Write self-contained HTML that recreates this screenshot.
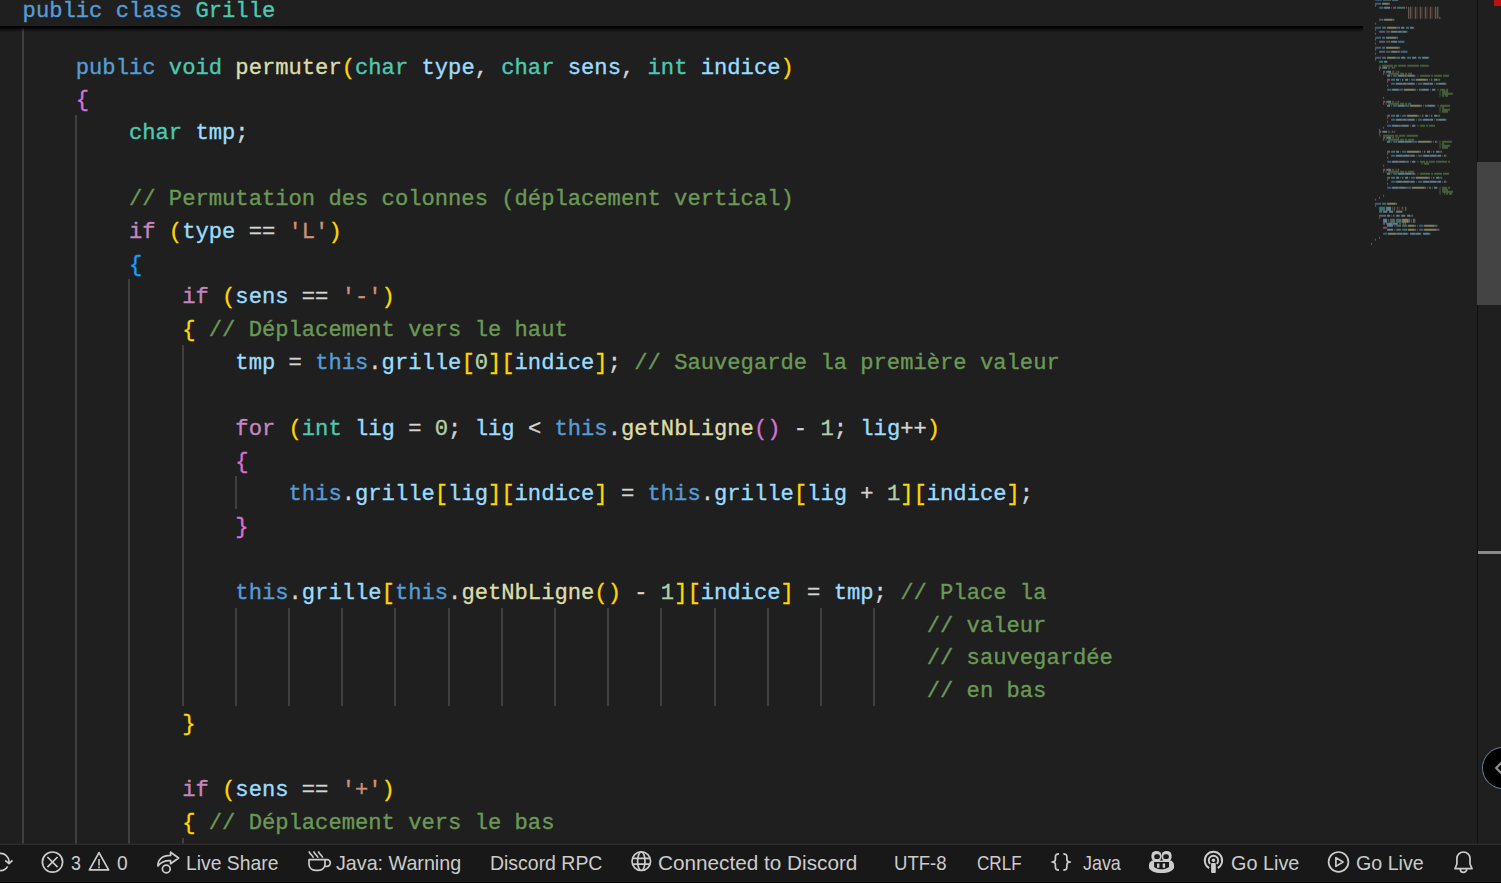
<!DOCTYPE html>
<html lang="fr"><head><meta charset="utf-8"><title>Grille.java</title>
<style>
html,body{margin:0;padding:0;background:#1f1f1f;}
body{width:1501px;height:883px;position:relative;overflow:hidden;font-family:"Liberation Sans",sans-serif;}
#ed{position:absolute;left:0;top:0;width:1501px;height:845px;overflow:hidden;background:#1f1f1f;}
.ln{position:absolute;left:22.6px;height:32.83px;line-height:32.83px;white-space:pre;font-family:"Liberation Mono",monospace;font-size:22.17px;color:#d4d4d4;letter-spacing:0;-webkit-text-stroke:.35px currentColor;}
.ln span{-webkit-text-stroke:.35px currentColor}
.g{position:absolute;width:2px;background:#404040;display:block}
#sticky{position:absolute;left:0;top:0;width:1363px;height:26px;background:#1f1f1f;z-index:3;overflow:hidden}
#shadow{position:absolute;left:0;top:26px;width:1363px;height:6px;z-index:3;background:linear-gradient(#000 0,#000 22%,rgba(0,0,0,.55) 50%,rgba(0,0,0,0) 100%)}
#sticky .ln{top:-3.6px}
.mm{position:absolute;left:1365px;top:0}
#sbar{position:absolute;left:1477px;top:0;width:24px;height:845px;border-left:1px solid #111113;box-sizing:border-box}
#thumb{position:absolute;left:1477px;top:162px;width:24px;height:143px;background:#444}
#err{position:absolute;left:1494px;top:0;width:7px;height:6px;background:#b81414}
#mark{position:absolute;left:1478px;top:551px;width:23px;height:3px;background:#8b8b89}
#fab{position:absolute;left:1482.6px;top:748px;width:40px;height:40px;border-radius:50%;background:#000;box-shadow:0 0 0 1px #5d7f95}
#sline{position:absolute;left:0;top:843px;width:1501px;height:1px;background:rgba(43,43,43,.45)}
#status{position:absolute;left:0;top:844px;width:1501px;height:39px;background:#181818;border-top:1px solid #2b2b2b;box-sizing:border-box;color:#ccc;font-size:20.2px;}
#bl1{position:absolute;left:0;top:881px;width:1501px;height:1px;background:#1f1f1f;z-index:5}
#bl2{position:absolute;left:0;top:882px;width:1501px;height:1px;background:#000;z-index:5}
#status .t{position:absolute;transform-origin:0 0;top:0.4px;height:36px;line-height:36px;white-space:pre}
#status svg{position:absolute}
</style></head><body>
<div id="ed">
<i class="g" style="left:22px;top:0px;height:844px"></i><i class="g" style="left:75px;top:115px;height:729px"></i><i class="g" style="left:128px;top:279px;height:565px"></i><i class="g" style="left:182px;top:345px;height:361px"></i><i class="g" style="left:182px;top:838px;height:6px"></i><i class="g" style="left:235px;top:476px;height:33px"></i><i class="g" style="left:235px;top:608px;height:98px"></i><i class="g" style="left:288px;top:608px;height:98px"></i><i class="g" style="left:341px;top:608px;height:98px"></i><i class="g" style="left:394px;top:608px;height:98px"></i><i class="g" style="left:448px;top:608px;height:98px"></i><i class="g" style="left:501px;top:608px;height:98px"></i><i class="g" style="left:554px;top:608px;height:98px"></i><i class="g" style="left:607px;top:608px;height:98px"></i><i class="g" style="left:660px;top:608px;height:98px"></i><i class="g" style="left:714px;top:608px;height:98px"></i><i class="g" style="left:767px;top:608px;height:98px"></i><i class="g" style="left:820px;top:608px;height:98px"></i><i class="g" style="left:873px;top:608px;height:98px"></i>
<div class="ln" style="top:19.72px"></div><div class="ln" style="top:52.55px">    <span style="color:#569cd6">public </span><span style="color:#4ec9b0">void </span><span style="color:#dcdcaa">permuter</span><span style="color:#ffd700">(</span><span style="color:#4ec9b0">char </span><span style="color:#9cdcfe">type</span><span style="color:#d4d4d4">, </span><span style="color:#4ec9b0">char </span><span style="color:#9cdcfe">sens</span><span style="color:#d4d4d4">, </span><span style="color:#4ec9b0">int </span><span style="color:#9cdcfe">indice</span><span style="color:#ffd700">)</span></div><div class="ln" style="top:85.38px">    <span style="color:#da70d6">{</span></div><div class="ln" style="top:118.21px">        <span style="color:#4ec9b0">char </span><span style="color:#9cdcfe">tmp</span><span style="color:#d4d4d4">;</span></div><div class="ln" style="top:151.04px"></div><div class="ln" style="top:183.87px">        <span style="color:#6a9955">// Permutation des colonnes (déplacement vertical)</span></div><div class="ln" style="top:216.70px">        <span style="color:#c586c0">if </span><span style="color:#ffd700">(</span><span style="color:#9cdcfe">type </span><span style="color:#d4d4d4">== </span><span style="color:#ce9178">&#x27;L&#x27;</span><span style="color:#ffd700">)</span></div><div class="ln" style="top:249.53px">        <span style="color:#179fff">{</span></div><div class="ln" style="top:282.36px">            <span style="color:#c586c0">if </span><span style="color:#ffd700">(</span><span style="color:#9cdcfe">sens </span><span style="color:#d4d4d4">== </span><span style="color:#ce9178">&#x27;-&#x27;</span><span style="color:#ffd700">)</span></div><div class="ln" style="top:315.19px">            <span style="color:#ffd700">{ </span><span style="color:#6a9955">// Déplacement vers le haut</span></div><div class="ln" style="top:348.02px">                <span style="color:#9cdcfe">tmp </span><span style="color:#d4d4d4">= </span><span style="color:#569cd6">this</span><span style="color:#d4d4d4">.</span><span style="color:#9cdcfe">grille</span><span style="color:#ffd700">[</span><span style="color:#b5cea8">0</span><span style="color:#ffd700">][</span><span style="color:#9cdcfe">indice</span><span style="color:#ffd700">]</span><span style="color:#d4d4d4">; </span><span style="color:#6a9955">// Sauvegarde la première valeur</span></div><div class="ln" style="top:380.85px"></div><div class="ln" style="top:413.68px">                <span style="color:#c586c0">for </span><span style="color:#ffd700">(</span><span style="color:#4ec9b0">int </span><span style="color:#9cdcfe">lig </span><span style="color:#d4d4d4">= </span><span style="color:#b5cea8">0</span><span style="color:#d4d4d4">; </span><span style="color:#9cdcfe">lig </span><span style="color:#d4d4d4">&lt; </span><span style="color:#569cd6">this</span><span style="color:#d4d4d4">.</span><span style="color:#dcdcaa">getNbLigne</span><span style="color:#da70d6">() </span><span style="color:#d4d4d4">- </span><span style="color:#b5cea8">1</span><span style="color:#d4d4d4">; </span><span style="color:#9cdcfe">lig</span><span style="color:#d4d4d4">++</span><span style="color:#ffd700">)</span></div><div class="ln" style="top:446.51px">                <span style="color:#da70d6">{</span></div><div class="ln" style="top:479.34px">                    <span style="color:#569cd6">this</span><span style="color:#d4d4d4">.</span><span style="color:#9cdcfe">grille</span><span style="color:#ffd700">[</span><span style="color:#9cdcfe">lig</span><span style="color:#ffd700">][</span><span style="color:#9cdcfe">indice</span><span style="color:#ffd700">] </span><span style="color:#d4d4d4">= </span><span style="color:#569cd6">this</span><span style="color:#d4d4d4">.</span><span style="color:#9cdcfe">grille</span><span style="color:#ffd700">[</span><span style="color:#9cdcfe">lig </span><span style="color:#d4d4d4">+ </span><span style="color:#b5cea8">1</span><span style="color:#ffd700">][</span><span style="color:#9cdcfe">indice</span><span style="color:#ffd700">]</span><span style="color:#d4d4d4">;</span></div><div class="ln" style="top:512.17px">                <span style="color:#da70d6">}</span></div><div class="ln" style="top:545.00px"></div><div class="ln" style="top:577.83px">                <span style="color:#569cd6">this</span><span style="color:#d4d4d4">.</span><span style="color:#9cdcfe">grille</span><span style="color:#ffd700">[</span><span style="color:#569cd6">this</span><span style="color:#d4d4d4">.</span><span style="color:#dcdcaa">getNbLigne</span><span style="color:#ffd700">() </span><span style="color:#d4d4d4">- </span><span style="color:#b5cea8">1</span><span style="color:#ffd700">][</span><span style="color:#9cdcfe">indice</span><span style="color:#ffd700">] </span><span style="color:#d4d4d4">= </span><span style="color:#9cdcfe">tmp</span><span style="color:#d4d4d4">; </span><span style="color:#6a9955">// Place la</span></div><div class="ln" style="top:610.66px">                                                                    <span style="color:#6a9955">// valeur</span></div><div class="ln" style="top:643.49px">                                                                    <span style="color:#6a9955">// sauvegardée</span></div><div class="ln" style="top:676.32px">                                                                    <span style="color:#6a9955">// en bas</span></div><div class="ln" style="top:709.15px">            <span style="color:#ffd700">}</span></div><div class="ln" style="top:741.98px"></div><div class="ln" style="top:774.81px">            <span style="color:#c586c0">if </span><span style="color:#ffd700">(</span><span style="color:#9cdcfe">sens </span><span style="color:#d4d4d4">== </span><span style="color:#ce9178">&#x27;+&#x27;</span><span style="color:#ffd700">)</span></div><div class="ln" style="top:807.64px">            <span style="color:#ffd700">{ </span><span style="color:#6a9955">// Déplacement vers le bas</span></div>
<div id="sticky"><div class="ln"><span style="color:#569cd6">public class </span><span style="color:#4ec9b0">Grille</span></div></div><div id="shadow"></div>
<svg class="mm" width="112" height="845" viewBox="1365 0 112 845" fill="none" stroke-width="2"><path stroke="#569cd6" stroke-opacity="0.5" d="M1375.1 -0.13h7M1375.1 3.87h6M1379.1 7.87h4M1379.1 19.87h4M1375.1 27.87h6M1386.1 31.87h4M1375.1 37.87h6M1386.1 41.87h4M1375.1 47.87h6M1386.1 51.87h4M1375.1 57.87h6M1393.1 75.87h4M1411.1 79.87h4M1391.1 83.87h4M1418.1 83.87h4M1387.1 89.87h4M1399.1 89.87h4M1393.1 105.87h4M1405.1 105.87h4M1402.1 115.87h4M1391.1 119.87h4M1418.1 119.87h4M1387.1 125.87h4M1393.1 141.87h4M1413.1 141.87h4M1402.1 151.87h4M1391.1 155.87h4M1418.1 155.87h4M1387.1 161.87h4M1393.1 173.87h4M1411.1 177.87h4M1391.1 181.87h4M1418.1 181.87h4M1387.1 187.87h4M1407.1 187.87h4M1375.1 203.87h6M1419.1 225.87h4M1419.1 229.87h4M1383.1 233.87h4"/><path stroke="#4ec9b0" stroke-opacity="0.5" d="M1383.1 -0.13h4M1397.1 7.87h4M1382.1 27.87h4M1397.1 27.87h3M1406.1 27.87h3M1382.1 37.87h3M1382.1 47.87h3M1382.1 57.87h4M1396.1 57.87h4M1407.1 57.87h4M1418.1 57.87h3M1379.1 61.87h4M1392.1 79.87h3M1392.1 115.87h3M1392.1 151.87h3M1392.1 177.87h3M1382.1 203.87h4M1379.1 207.87h4M1379.1 209.87h4M1379.1 211.87h3M1383.1 215.87h3M1391.1 219.87h3M1397.1 219.87h4M1391.1 221.87h3M1397.1 221.87h4M1397.1 225.87h3M1403.1 225.87h4M1397.1 229.87h3M1403.1 229.87h4"/><path stroke="#d4d4d4" stroke-opacity="0.36" d="M1387.1 -0.13h1M1388.1 -0.13h1M1389.1 -0.13h1M1390.1 -0.13h1M1388.1 3.87h1M1389.1 3.87h1M1375.1 5.87h1M1401.1 7.87h1M1402.1 7.87h1M1403.1 7.87h1M1404.1 7.87h1M1406.1 7.87h1M1408.1 7.87h1M1437.1 7.87h1M1408.1 9.87h1M1437.1 9.87h1M1408.1 11.87h1M1437.1 11.87h1M1408.1 13.87h1M1437.1 13.87h1M1408.1 15.87h1M1437.1 15.87h1M1408.1 17.87h1M1437.1 17.87h1M1439.1 17.87h1M1392.1 19.87h1M1393.1 19.87h1M1375.1 23.87h1M1396.1 27.87h1M1413.1 27.87h1M1375.1 29.87h1M1397.1 31.87h1M1401.1 31.87h1M1402.1 31.87h1M1406.1 31.87h1M1375.1 33.87h1M1396.1 37.87h1M1397.1 37.87h1M1375.1 39.87h1M1375.1 43.87h1M1398.1 47.87h1M1399.1 47.87h1M1375.1 49.87h1M1397.1 51.87h1M1399.1 51.87h1M1375.1 53.87h1M1395.1 57.87h1M1428.1 57.87h1M1375.1 59.87h1M1382.1 67.87h1M1394.1 67.87h1M1379.1 69.87h1M1386.1 71.87h1M1398.1 71.87h1M1383.1 73.87h1M1404.1 75.87h1M1406.1 75.87h1M1407.1 75.87h1M1414.1 75.87h1M1391.1 79.87h1M1426.1 79.87h1M1427.1 79.87h1M1439.1 79.87h1M1387.1 81.87h1M1402.1 83.87h1M1406.1 83.87h1M1407.1 83.87h1M1414.1 83.87h1M1429.1 83.87h1M1437.1 83.87h1M1438.1 83.87h1M1445.1 83.87h1M1387.1 85.87h1M1398.1 89.87h1M1414.1 89.87h1M1415.1 89.87h1M1420.1 89.87h1M1421.1 89.87h1M1428.1 89.87h1M1383.1 97.87h1M1386.1 101.87h1M1398.1 101.87h1M1383.1 103.87h1M1404.1 105.87h1M1420.1 105.87h1M1421.1 105.87h1M1426.1 105.87h1M1427.1 105.87h1M1434.1 105.87h1M1391.1 115.87h1M1417.1 115.87h1M1418.1 115.87h1M1439.1 115.87h1M1387.1 117.87h1M1402.1 119.87h1M1406.1 119.87h1M1407.1 119.87h1M1414.1 119.87h1M1429.1 119.87h1M1437.1 119.87h1M1438.1 119.87h1M1445.1 119.87h1M1387.1 121.87h1M1398.1 125.87h1M1400.1 125.87h1M1401.1 125.87h1M1408.1 125.87h1M1383.1 127.87h1M1379.1 129.87h1M1382.1 131.87h1M1394.1 131.87h1M1379.1 133.87h1M1386.1 137.87h1M1398.1 137.87h1M1383.1 139.87h1M1404.1 141.87h1M1411.1 141.87h1M1412.1 141.87h1M1430.1 141.87h1M1431.1 141.87h1M1436.1 141.87h1M1391.1 151.87h1M1419.1 151.87h1M1420.1 151.87h1M1441.1 151.87h1M1387.1 153.87h1M1402.1 155.87h1M1409.1 155.87h1M1410.1 155.87h1M1414.1 155.87h1M1429.1 155.87h1M1436.1 155.87h1M1437.1 155.87h1M1445.1 155.87h1M1387.1 157.87h1M1398.1 161.87h1M1405.1 161.87h1M1406.1 161.87h1M1408.1 161.87h1M1383.1 165.87h1M1386.1 169.87h1M1398.1 169.87h1M1383.1 171.87h1M1404.1 173.87h1M1411.1 173.87h1M1412.1 173.87h1M1414.1 173.87h1M1391.1 177.87h1M1428.1 177.87h1M1429.1 177.87h1M1441.1 177.87h1M1387.1 179.87h1M1402.1 181.87h1M1409.1 181.87h1M1410.1 181.87h1M1414.1 181.87h1M1429.1 181.87h1M1436.1 181.87h1M1437.1 181.87h1M1445.1 181.87h1M1387.1 183.87h1M1398.1 187.87h1M1405.1 187.87h1M1406.1 187.87h1M1424.1 187.87h1M1425.1 187.87h1M1430.1 187.87h1M1383.1 195.87h1M1379.1 197.87h1M1375.1 199.87h1M1395.1 203.87h1M1396.1 203.87h1M1375.1 205.87h1M1383.1 207.87h1M1384.1 207.87h1M1394.1 207.87h1M1405.1 207.87h1M1383.1 209.87h1M1384.1 209.87h1M1394.1 209.87h1M1405.1 209.87h1M1382.1 215.87h1M1412.1 215.87h1M1379.1 217.87h1M1390.1 219.87h1M1394.1 219.87h1M1396.1 219.87h1M1408.1 219.87h1M1409.1 219.87h1M1414.1 219.87h1M1390.1 221.87h1M1394.1 221.87h1M1396.1 221.87h1M1408.1 221.87h1M1409.1 221.87h1M1414.1 221.87h1M1386.1 223.87h1M1392.1 223.87h1M1397.1 223.87h1M1405.1 223.87h1M1396.1 225.87h1M1400.1 225.87h1M1402.1 225.87h1M1414.1 225.87h1M1415.1 225.87h1M1434.1 225.87h1M1435.1 225.87h1M1436.1 225.87h1M1396.1 229.87h1M1400.1 229.87h1M1402.1 229.87h1M1414.1 229.87h1M1415.1 229.87h1M1436.1 229.87h1M1437.1 229.87h1M1438.1 229.87h1M1396.1 233.87h1M1402.1 233.87h1M1407.1 233.87h1M1415.1 233.87h1M1420.1 233.87h1M1429.1 233.87h1M1379.1 237.87h1M1375.1 239.87h1M1371.1 243.87h1"/><path stroke="#9cdcfe" stroke-opacity="0.5" d="M1392.1 -0.13h6M1384.1 7.87h6M1401.1 27.87h3M1410.1 27.87h3M1391.1 31.87h6M1398.1 31.87h3M1403.1 31.87h3M1391.1 41.87h6M1391.1 51.87h6M1401.1 57.87h4M1412.1 57.87h4M1422.1 57.87h6M1384.1 61.87h3M1383.1 67.87h4M1387.1 71.87h4M1387.1 75.87h3M1398.1 75.87h6M1408.1 75.87h6M1396.1 79.87h3M1405.1 79.87h3M1434.1 79.87h3M1396.1 83.87h6M1403.1 83.87h3M1408.1 83.87h6M1423.1 83.87h6M1430.1 83.87h3M1439.1 83.87h6M1392.1 89.87h6M1422.1 89.87h6M1432.1 89.87h3M1387.1 101.87h4M1387.1 105.87h3M1398.1 105.87h6M1428.1 105.87h6M1396.1 115.87h3M1425.1 115.87h3M1434.1 115.87h3M1396.1 119.87h6M1403.1 119.87h3M1408.1 119.87h6M1423.1 119.87h6M1430.1 119.87h3M1439.1 119.87h6M1392.1 125.87h6M1402.1 125.87h6M1412.1 125.87h3M1383.1 131.87h4M1387.1 137.87h4M1387.1 141.87h3M1398.1 141.87h6M1405.1 141.87h6M1396.1 151.87h3M1427.1 151.87h3M1436.1 151.87h3M1396.1 155.87h6M1403.1 155.87h6M1411.1 155.87h3M1423.1 155.87h6M1430.1 155.87h6M1438.1 155.87h3M1392.1 161.87h6M1399.1 161.87h6M1412.1 161.87h3M1387.1 169.87h4M1387.1 173.87h3M1398.1 173.87h6M1405.1 173.87h6M1396.1 177.87h3M1405.1 177.87h3M1436.1 177.87h3M1396.1 181.87h6M1403.1 181.87h6M1411.1 181.87h3M1423.1 181.87h6M1430.1 181.87h6M1438.1 181.87h3M1392.1 187.87h6M1399.1 187.87h6M1434.1 187.87h3M1386.1 207.87h5M1386.1 209.87h5M1383.1 211.87h4M1389.1 211.87h4M1396.1 211.87h6M1387.1 215.87h3M1396.1 215.87h3M1407.1 215.87h3M1383.1 219.87h4M1383.1 221.87h4M1387.1 223.87h5M1393.1 223.87h4M1387.1 225.87h6M1387.1 229.87h6M1397.1 233.87h5M1403.1 233.87h4M1410.1 233.87h5M1416.1 233.87h4M1423.1 233.87h6"/><path stroke="#d4d4d4" stroke-opacity="0.13" d="M1398.1 -0.13h1M1383.1 7.87h1M1412.1 7.87h1M1417.1 7.87h1M1422.1 7.87h1M1427.1 7.87h1M1432.1 7.87h1M1438.1 7.87h1M1412.1 9.87h1M1417.1 9.87h1M1422.1 9.87h1M1427.1 9.87h1M1432.1 9.87h1M1438.1 9.87h1M1412.1 11.87h1M1417.1 11.87h1M1422.1 11.87h1M1427.1 11.87h1M1432.1 11.87h1M1438.1 11.87h1M1412.1 13.87h1M1417.1 13.87h1M1422.1 13.87h1M1427.1 13.87h1M1432.1 13.87h1M1438.1 13.87h1M1412.1 15.87h1M1417.1 15.87h1M1422.1 15.87h1M1427.1 15.87h1M1432.1 15.87h1M1438.1 15.87h1M1412.1 17.87h1M1417.1 17.87h1M1422.1 17.87h1M1427.1 17.87h1M1432.1 17.87h1M1440.1 17.87h1M1383.1 19.87h1M1394.1 19.87h1M1404.1 27.87h1M1390.1 31.87h1M1407.1 31.87h1M1390.1 41.87h1M1397.1 41.87h1M1404.1 41.87h1M1390.1 51.87h1M1400.1 51.87h1M1407.1 51.87h1M1405.1 57.87h1M1416.1 57.87h1M1387.1 61.87h1M1397.1 75.87h1M1415.1 75.87h1M1403.1 79.87h1M1415.1 79.87h1M1432.1 79.87h1M1395.1 83.87h1M1422.1 83.87h1M1446.1 83.87h1M1391.1 89.87h1M1403.1 89.87h1M1435.1 89.87h1M1397.1 105.87h1M1409.1 105.87h1M1435.1 105.87h1M1406.1 115.87h1M1423.1 115.87h1M1432.1 115.87h1M1395.1 119.87h1M1422.1 119.87h1M1446.1 119.87h1M1391.1 125.87h1M1415.1 125.87h1M1397.1 141.87h1M1417.1 141.87h1M1437.1 141.87h1M1406.1 151.87h1M1425.1 151.87h1M1434.1 151.87h1M1395.1 155.87h1M1422.1 155.87h1M1446.1 155.87h1M1391.1 161.87h1M1415.1 161.87h1M1397.1 173.87h1M1415.1 173.87h1M1403.1 177.87h1M1415.1 177.87h1M1434.1 177.87h1M1395.1 181.87h1M1422.1 181.87h1M1446.1 181.87h1M1391.1 187.87h1M1411.1 187.87h1M1437.1 187.87h1M1399.1 207.87h1M1406.1 207.87h1M1399.1 209.87h1M1406.1 209.87h1M1387.1 211.87h1M1394.1 211.87h1M1402.1 211.87h1M1394.1 215.87h1M1405.1 215.87h1M1401.1 219.87h1M1415.1 219.87h1M1401.1 221.87h1M1415.1 221.87h1M1407.1 225.87h1M1423.1 225.87h1M1437.1 225.87h1M1407.1 229.87h1M1423.1 229.87h1M1439.1 229.87h1M1387.1 233.87h1M1408.1 233.87h1M1421.1 233.87h1M1430.1 233.87h1"/><path stroke="#dcdcaa" stroke-opacity="0.5" d="M1382.1 3.87h6M1384.1 19.87h8M1387.1 27.87h9M1386.1 37.87h10M1386.1 47.87h12M1387.1 57.87h8M1416.1 79.87h10M1404.1 89.87h10M1410.1 105.87h10M1407.1 115.87h10M1418.1 141.87h12M1407.1 151.87h12M1416.1 177.87h12M1412.1 187.87h12M1387.1 203.87h8M1402.1 219.87h6M1402.1 221.87h6M1408.1 225.87h6M1424.1 225.87h10M1408.1 229.87h6M1424.1 229.87h12M1388.1 233.87h8"/><path stroke="#d4d4d4" stroke-opacity="0.26" d="M1391.1 7.87h1M1388.1 67.87h1M1389.1 67.87h1M1392.1 71.87h1M1393.1 71.87h1M1391.1 75.87h1M1400.1 79.87h1M1409.1 79.87h1M1429.1 79.87h1M1437.1 79.87h1M1438.1 79.87h1M1416.1 83.87h1M1434.1 83.87h1M1417.1 89.87h1M1430.1 89.87h1M1392.1 101.87h1M1393.1 101.87h1M1391.1 105.87h1M1423.1 105.87h1M1400.1 115.87h1M1420.1 115.87h1M1429.1 115.87h1M1437.1 115.87h1M1438.1 115.87h1M1416.1 119.87h1M1434.1 119.87h1M1410.1 125.87h1M1388.1 131.87h1M1389.1 131.87h1M1392.1 137.87h1M1393.1 137.87h1M1391.1 141.87h1M1433.1 141.87h1M1400.1 151.87h1M1422.1 151.87h1M1431.1 151.87h1M1439.1 151.87h1M1440.1 151.87h1M1416.1 155.87h1M1442.1 155.87h1M1410.1 161.87h1M1392.1 169.87h1M1393.1 169.87h1M1391.1 173.87h1M1400.1 177.87h1M1409.1 177.87h1M1431.1 177.87h1M1439.1 177.87h1M1440.1 177.87h1M1416.1 181.87h1M1442.1 181.87h1M1427.1 187.87h1M1432.1 187.87h1M1392.1 207.87h1M1392.1 209.87h1M1391.1 215.87h1M1399.1 215.87h1M1410.1 215.87h1M1411.1 215.87h1M1388.1 219.87h1M1411.1 219.87h1M1388.1 221.87h1M1411.1 221.87h1M1399.1 223.87h1M1400.1 223.87h1M1394.1 225.87h1M1417.1 225.87h1M1394.1 229.87h1M1417.1 229.87h1"/><path stroke="#c586c0" stroke-opacity="0.5" d="M1393.1 7.87h3M1379.1 31.87h6M1379.1 41.87h6M1379.1 51.87h6M1379.1 67.87h2M1383.1 71.87h2M1387.1 79.87h3M1383.1 101.87h2M1387.1 115.87h3M1379.1 131.87h2M1383.1 137.87h2M1387.1 151.87h3M1383.1 169.87h2M1387.1 177.87h3M1379.1 215.87h3M1383.1 223.87h2M1383.1 227.87h4"/><path stroke="#ce9178" stroke-opacity="0.13" d="M1409.1 7.87h1M1411.1 7.87h1M1414.1 7.87h1M1416.1 7.87h1M1419.1 7.87h1M1421.1 7.87h1M1424.1 7.87h1M1426.1 7.87h1M1429.1 7.87h1M1431.1 7.87h1M1434.1 7.87h1M1436.1 7.87h1M1409.1 9.87h1M1411.1 9.87h1M1414.1 9.87h1M1416.1 9.87h1M1419.1 9.87h1M1421.1 9.87h1M1424.1 9.87h1M1426.1 9.87h1M1429.1 9.87h1M1431.1 9.87h1M1434.1 9.87h1M1436.1 9.87h1M1409.1 11.87h1M1411.1 11.87h1M1414.1 11.87h1M1416.1 11.87h1M1419.1 11.87h1M1421.1 11.87h1M1424.1 11.87h1M1426.1 11.87h1M1429.1 11.87h1M1431.1 11.87h1M1434.1 11.87h1M1436.1 11.87h1M1409.1 13.87h1M1411.1 13.87h1M1414.1 13.87h1M1416.1 13.87h1M1419.1 13.87h1M1421.1 13.87h1M1424.1 13.87h1M1426.1 13.87h1M1429.1 13.87h1M1431.1 13.87h1M1434.1 13.87h1M1436.1 13.87h1M1409.1 15.87h1M1411.1 15.87h1M1414.1 15.87h1M1416.1 15.87h1M1419.1 15.87h1M1421.1 15.87h1M1424.1 15.87h1M1426.1 15.87h1M1429.1 15.87h1M1431.1 15.87h1M1434.1 15.87h1M1436.1 15.87h1M1409.1 17.87h1M1411.1 17.87h1M1414.1 17.87h1M1416.1 17.87h1M1419.1 17.87h1M1421.1 17.87h1M1424.1 17.87h1M1426.1 17.87h1M1429.1 17.87h1M1431.1 17.87h1M1434.1 17.87h1M1436.1 17.87h1M1391.1 67.87h1M1393.1 67.87h1M1395.1 71.87h1M1397.1 71.87h1M1395.1 101.87h1M1397.1 101.87h1M1391.1 131.87h1M1393.1 131.87h1M1395.1 137.87h1M1397.1 137.87h1M1395.1 169.87h1M1397.1 169.87h1M1396.1 207.87h1M1398.1 207.87h1M1401.1 207.87h1M1403.1 207.87h1M1396.1 209.87h1M1398.1 209.87h1M1401.1 209.87h1M1403.1 209.87h1M1402.1 223.87h1M1404.1 223.87h1"/><path stroke="#ce9178" stroke-opacity="0.5" d="M1410.1 7.87h1M1415.1 7.87h1M1420.1 7.87h1M1425.1 7.87h1M1430.1 7.87h1M1435.1 7.87h1M1410.1 9.87h1M1415.1 9.87h1M1420.1 9.87h1M1425.1 9.87h1M1430.1 9.87h1M1435.1 9.87h1M1410.1 11.87h1M1415.1 11.87h1M1420.1 11.87h1M1425.1 11.87h1M1430.1 11.87h1M1435.1 11.87h1M1410.1 13.87h1M1415.1 13.87h1M1420.1 13.87h1M1425.1 13.87h1M1430.1 13.87h1M1435.1 13.87h1M1410.1 15.87h1M1415.1 15.87h1M1420.1 15.87h1M1425.1 15.87h1M1430.1 15.87h1M1435.1 15.87h1M1410.1 17.87h1M1415.1 17.87h1M1420.1 17.87h1M1425.1 17.87h1M1430.1 17.87h1M1435.1 17.87h1M1392.1 67.87h1M1392.1 131.87h1M1397.1 207.87h1M1402.1 207.87h1M1403.1 223.87h1"/><path stroke="#4fc1ff" stroke-opacity="0.5" d="M1398.1 41.87h6M1401.1 51.87h6"/><path stroke="#b5cea8" stroke-opacity="0.5" d="M1398.1 51.87h1M1405.1 75.87h1M1402.1 79.87h1M1431.1 79.87h1M1436.1 83.87h1M1419.1 89.87h1M1425.1 105.87h1M1422.1 115.87h1M1431.1 115.87h1M1436.1 119.87h1M1399.1 125.87h1M1435.1 141.87h1M1424.1 151.87h1M1433.1 151.87h1M1444.1 155.87h1M1407.1 161.87h1M1413.1 173.87h1M1402.1 177.87h1M1433.1 177.87h1M1444.1 181.87h1M1429.1 187.87h1M1393.1 215.87h1M1401.1 215.87h4M1413.1 219.87h1M1413.1 221.87h1"/><path stroke="#6a9955" stroke-opacity="0.26" d="M1379.1 65.87h2M1385.1 73.87h2M1417.1 75.87h2M1437.1 89.87h2M1439.1 91.87h2M1439.1 93.87h2M1439.1 95.87h2M1385.1 103.87h2M1437.1 105.87h2M1439.1 107.87h2M1439.1 109.87h2M1439.1 111.87h2M1417.1 125.87h2M1379.1 135.87h2M1385.1 139.87h2M1439.1 141.87h2M1439.1 143.87h2M1439.1 145.87h2M1439.1 147.87h2M1417.1 161.87h2M1421.1 163.87h2M1385.1 171.87h2M1417.1 173.87h2M1439.1 187.87h2M1439.1 189.87h2M1439.1 191.87h2M1439.1 193.87h2"/><path stroke="#6a9955" stroke-opacity="0.5" d="M1382.1 65.87h11M1394.1 65.87h3M1398.1 65.87h8M1408.1 65.87h11M1420.1 65.87h8M1388.1 73.87h11M1400.1 73.87h4M1405.1 73.87h2M1408.1 73.87h4M1420.1 75.87h10M1431.1 75.87h2M1434.1 75.87h8M1443.1 75.87h6M1440.1 89.87h5M1446.1 89.87h2M1442.1 91.87h6M1442.1 93.87h11M1442.1 95.87h2M1445.1 95.87h3M1388.1 103.87h11M1400.1 103.87h4M1405.1 103.87h2M1408.1 103.87h3M1440.1 105.87h10M1442.1 107.87h2M1442.1 109.87h8M1442.1 111.87h6M1420.1 125.87h5M1426.1 125.87h2M1429.1 125.87h6M1383.1 135.87h11M1395.1 135.87h3M1399.1 135.87h6M1407.1 135.87h11M1388.1 139.87h11M1400.1 139.87h4M1405.1 139.87h2M1408.1 139.87h6M1442.1 141.87h10M1442.1 143.87h2M1442.1 145.87h8M1442.1 147.87h6M1420.1 161.87h5M1426.1 161.87h2M1429.1 161.87h6M1436.1 161.87h11M1448.1 161.87h2M1424.1 163.87h5M1388.1 171.87h11M1400.1 171.87h4M1405.1 171.87h2M1408.1 171.87h6M1420.1 173.87h10M1431.1 173.87h2M1434.1 173.87h8M1443.1 173.87h6M1442.1 187.87h5M1448.1 187.87h2M1442.1 189.87h6M1442.1 191.87h11M1444.1 193.87h1M1446.1 193.87h2M1449.1 193.87h3"/><path stroke="#6a9955" stroke-opacity="0.36" d="M1407.1 65.87h1M1428.1 65.87h1M1406.1 135.87h1"/><path stroke="#ce9178" stroke-opacity="0.26" d="M1396.1 71.87h1M1396.1 101.87h1M1396.1 137.87h1M1396.1 169.87h1M1397.1 209.87h1M1402.1 209.87h1"/></svg>
<div id="sbar"></div><div id="thumb"></div><div id="err"></div><div id="mark"></div>
<div id="fab"><svg width="40" height="40" viewBox="0 0 40 40" style="position:absolute;left:0;top:0"><path d="M19.8 13.2 L13.2 20 L19.8 26.8" fill="none" stroke="#8f8f8f" stroke-width="2.2"/></svg></div>
</div>
<div id="sline"></div><div id="bl1"></div><div id="bl2"></div>
<div id="status">
<span class="t" style="left:70.60px;transform:scaleX(0.8800)">3</span>
<span class="t" style="left:117.30px;transform:scaleX(0.9500)">0</span>
<span class="t" style="left:186.00px;transform:scaleX(0.9579)">Live Share</span>
<span class="t" style="left:336.00px;transform:scaleX(0.9756)">Java: Warning</span>
<span class="t" style="left:489.60px;transform:scaleX(0.9635)">Discord RPC</span>
<span class="t" style="left:658.00px;transform:scaleX(1.0271)">Connected to Discord</span>
<span class="t" style="left:894.40px;transform:scaleX(0.9202)">UTF-8</span>
<span class="t" style="left:977.00px;transform:scaleX(0.8462)">CRLF</span>
<span class="t" style="left:1083.40px;transform:scaleX(0.8870)">Java</span>
<span class="t" style="left:1231.00px;transform:scaleX(0.9824)">Go Live</span>
<span class="t" style="left:1356.00px;transform:scaleX(0.9736)">Go Live</span>
<svg width="1501" height="38" viewBox="0 845 1501 38" style="left:0;top:0" fill="none" stroke="#ccc" stroke-width="1.7" stroke-linejoin="round" stroke-linecap="butt">
<!-- sync -->
<path d="M-1 853.6 A8.4 8.4 0 0 1 9 862.6 M5.2 860.3 L9 863.6 L12.5 860.3 M7.6 866.3 A8.4 8.4 0 0 1 -1 870.4"/>
<!-- error -->
<circle cx="52.5" cy="862.1" r="10.1"/><path d="M47.4 857 L57.6 867.2 M57.6 857 L47.4 867.2"/>
<!-- warning -->
<path d="M99 852.6 L108.6 869.9 H89.4 Z"/><path d="M99 859 V865.4 M99 866.6 V868.2" stroke-width="1.6"/>
<!-- live share -->
<path d="M170.6 852.2 L178.6 858 L170.6 863.8 V860.6 C164.5 860.3 160.6 862.4 158 866 C157.6 860 162 855.4 170.6 855.4 Z"/><circle cx="166.3" cy="869" r="3.9"/>
<!-- coffee -->
<path d="M309 859.7 H325 V864 C325 868 322 870.3 318.5 870.3 H315.5 C312 870.3 309 868 309 864 Z M325 859.7 H327 A3.3 3.3 0 0 1 327 866.3 H324.7"/>
<path d="M309 851.4 C309.5 854.6 313 854.6 313.2 857.8 M313.7 851.4 C314.2 854.6 317.7 854.6 317.9 857.8 M318.4 851.4 C318.9 854.6 322.4 854.6 322.6 857.8"/>
<!-- globe -->
<circle cx="641.3" cy="861.2" r="9.3"/><ellipse cx="641.3" cy="861.2" rx="3.7" ry="9.3"/><path d="M632.6 858.3 H650 M632.6 864.1 H650" />
<!-- braces -->
<path d="M1059 853.9 C1056 853.9 1055.4 855 1055.4 857 V859.5 C1055.4 861 1054.3 862 1052 862 C1054.3 862 1055.4 863 1055.4 864.5 V867 C1055.4 869 1056 870.1 1059 870.1"/>
<path d="M1063.3 853.9 C1066.3 853.9 1066.9 855 1066.9 857 V859.5 C1066.9 861 1068 862 1070.3 862 C1068 862 1066.9 863 1066.9 864.5 V867 C1066.9 869 1066.3 870.1 1063.3 870.1"/>
<!-- copilot -->
<path d="M1152 860.6 C1150 861.8 1149 863.4 1149 865 V867.4 C1149 870.2 1155 873.1 1161.5 873.1 C1168 873.1 1174 870.2 1174 867.4 V865 C1174 863.4 1173 861.8 1171 860.6 Z" fill="#ccc" stroke="none"/>
<path d="M1154.1 862.1 H1169 V866.9 C1167 868.5 1164 869.2 1161.5 869.2 C1159 869.2 1156 868.5 1154.1 866.9 Z" fill="#181818" stroke="none"/>
<path d="M1158.2 863.4 V867.8 M1163.9 863.4 V867.8" stroke-width="2.4"/>
<rect x="1151.4" y="851" width="10" height="10.6" rx="4.6" fill="#ccc" stroke="none"/><rect x="1161.6" y="851" width="10" height="10.6" rx="4.6" fill="#ccc" stroke="none"/>
<rect x="1154.2" y="854.2" width="5.7" height="4.9" rx="2.2" fill="#181818" stroke="none"/><rect x="1163.2" y="854.2" width="5.7" height="4.9" rx="2.2" fill="#181818" stroke="none"/>
<!-- broadcast -->
<path d="M1209.2 868.1 A8.7 8.7 0 1 1 1217.7 868.1" stroke-width="1.9"/><path d="M1210.2 863.9 A4.7 4.7 0 1 1 1216.7 863.9" stroke-width="1.9"/>
<circle cx="1213.45" cy="860.2" r="1.7" fill="#ccc" stroke="none"/><rect x="1211.1" y="863" width="4.7" height="10" rx="1" fill="#ccc" stroke="none"/>
<!-- play -->
<circle cx="1338.5" cy="861.9" r="9.9"/><path d="M1335.9 857.6 L1343 862 L1335.9 866.4 Z"/>
<!-- bell -->
<path d="M1455 868.7 H1472 L1470 864 V858.5 A6.55 6.55 0 0 0 1456.9 858.5 V864 Z M1460.3 869.2 A3.2 3.2 0 0 0 1466.7 869.2"/>
</svg>

</div>
</body></html>
